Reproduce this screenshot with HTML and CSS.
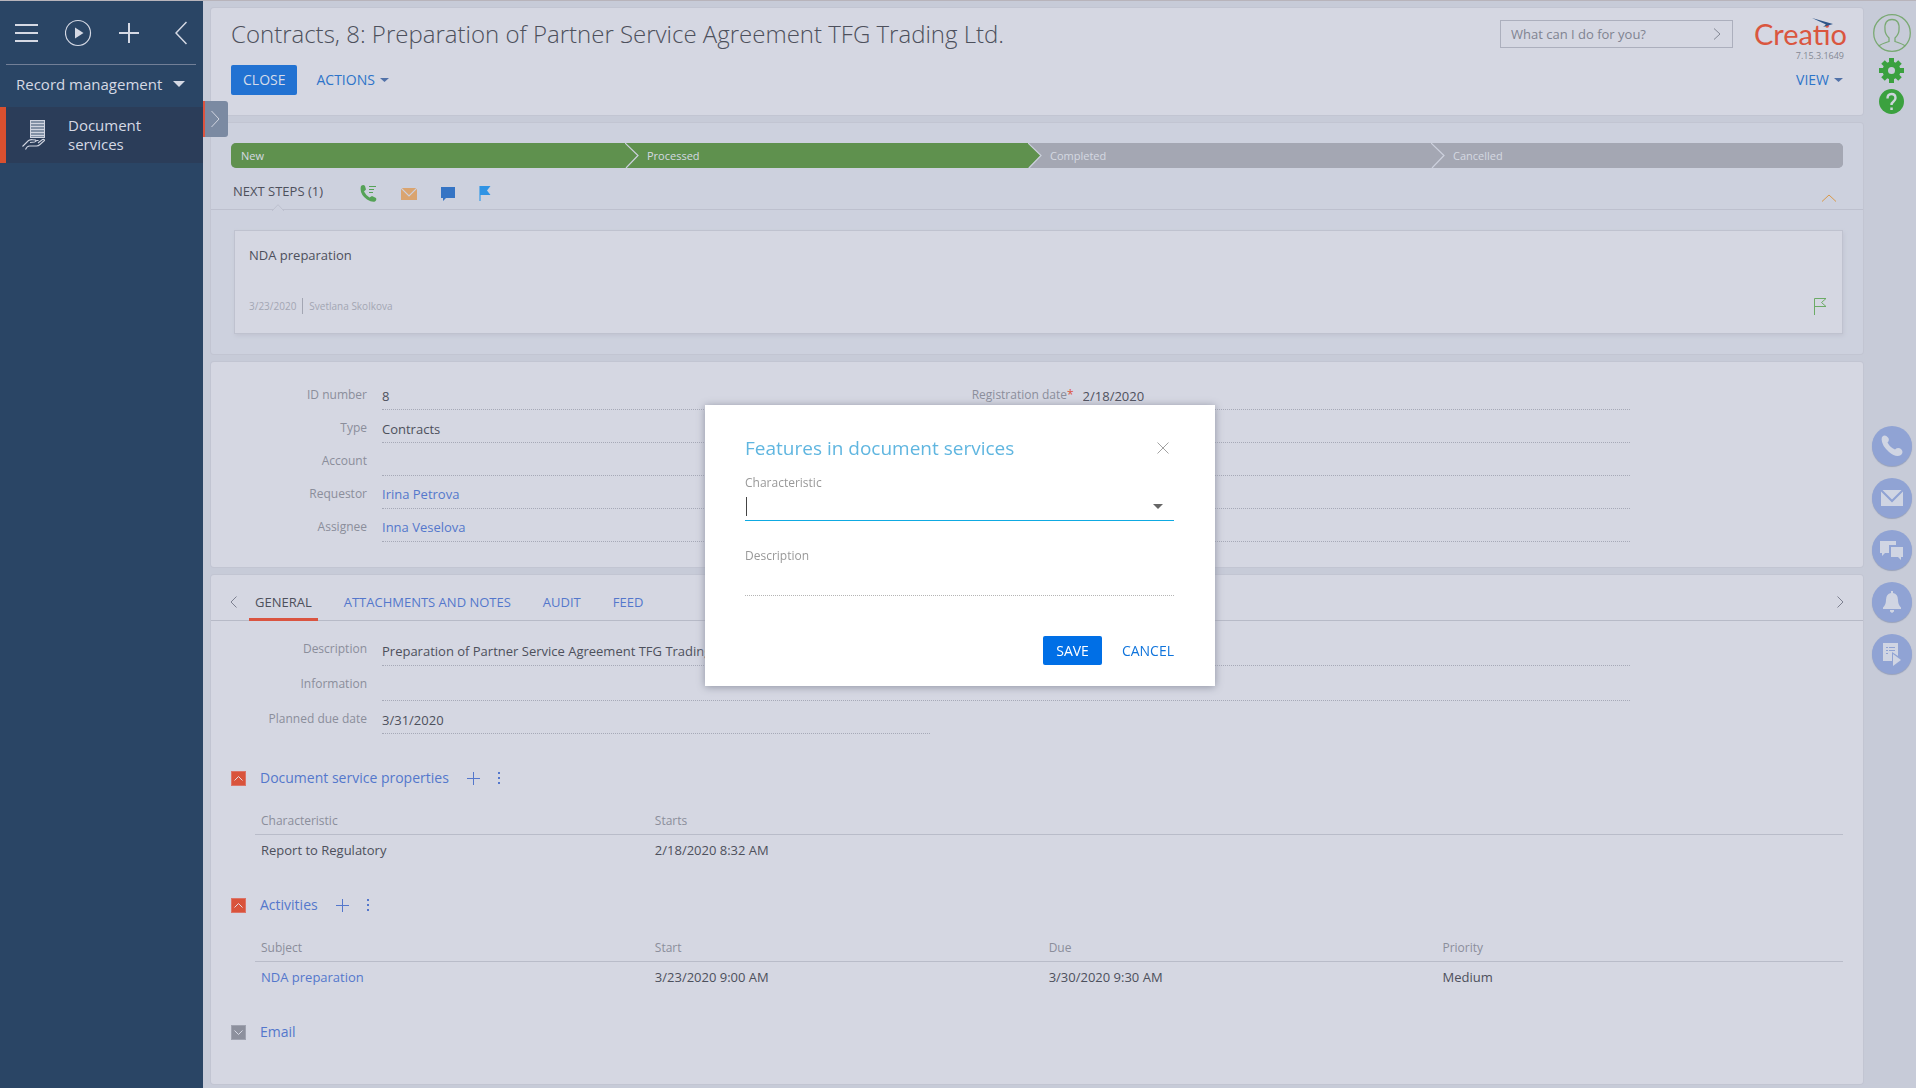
FILE: index.html
```html
<!DOCTYPE html>
<html lang="en">
<head>
<meta charset="utf-8">
<title>Contracts, 8: Preparation of Partner Service Agreement TFG Trading Ltd.</title>
<link rel="stylesheet" href="styles.css">
</head>
<body>
<div class="app">
  <nav class="sidebar">
    <div class="side-tools">
      <button class="icon-btn" aria-label="Menu"><svg width="24" height="20" viewBox="0 0 24 20"><path d="M0 2h23M0 10h23M0 18h23" stroke="#d5d9e4" stroke-width="2"/></svg></button>
      <button class="icon-btn" aria-label="Run process"><svg width="28" height="28" viewBox="0 0 28 28"><circle cx="13" cy="14" r="12.500" fill="none" stroke="#d5d9e4" stroke-width="1.200"/><path d="M10 8.500v11l8.500-5.500z" fill="#d5d9e4"/></svg></button>
      <button class="icon-btn" aria-label="Add"><svg width="20" height="20" viewBox="0 0 20 20"><path d="M10 0v20M0 10h20" stroke="#d5d9e4" stroke-width="2"/></svg></button>
      <button class="icon-btn collapse" aria-label="Collapse"><svg width="12" height="24" viewBox="0 0 12 24"><path d="M11.500 1L1 12l10.500 11" fill="none" stroke="#d5d9e4" stroke-width="1.500"/></svg></button>
    </div>
    <button class="workplace">Record management <svg width="12" height="6" viewBox="0 0 12 6"><path d="M0 0h12L6 6z" fill="#d5d9e4"/></svg></button>
    <a class="section" href="#services">
      <svg width="24" height="32" viewBox="0 0 24 32" fill="none" stroke="#cfd4e0"><rect x="8.500" y="1.500" width="14" height="17" fill="#8291a6"/><path d="M9 4.500h13M9 7.500h13M9 10.500h13M9 13.500h13M9 16.500h13" stroke-width="1.200"/><path d="M.5 27.500l6-6q2-1 4-.8l3 .3q1 1.500-1 2l-4.500.5M13 22.500l2-1h1.500M3.500 30.500q1.500-3.500 4-3.500h7q2 0 3.500-1.500l4.500-4q0-1.500-2-1l-4.500 3.500" stroke-width="1.100"/></svg>
      <span>Document services</span>
    </a>
  </nav>

  <main class="content">
    <button class="handle" aria-label="Show list"><svg width="9" height="18" viewBox="0 0 9 18"><path d="M.5 1L8 9L.5 17" fill="none" stroke="#d0d4df"/></svg></button>
    <header class="card head">
      <div class="head-row">
        <h1>Contracts, 8: Preparation of Partner Service Agreement TFG Trading Ltd.</h1>
        <div class="command">
          <input type="text" placeholder="What can I do for you?" aria-label="Command line">
          <button class="icon-btn" aria-label="Run command"><svg width="8" height="12" viewBox="0 0 8 12"><path d="M1 .5L7 6L1 11.500" fill="none" stroke="#848894"/></svg></button>
        </div>
        <div class="brand">
          <svg class="bird" width="22" height="10" viewBox="0 0 22 10"><path d="M0 0L21 6L11 9L14 6.500z" fill="#2d5488"/></svg>
          <span class="logo">Creatio</span>
          <span class="version">7.15.3.1649</span>
        </div>
      </div>
      <div class="head-actions">
        <button class="btn solid muted">CLOSE</button>
        <button class="btn flat muted">ACTIONS <svg width="9" height="4" viewBox="0 0 9 4"><path d="M0 0h9L4.500 4z" fill="#5272a8"/></svg></button>
        <button class="btn flat muted view">VIEW <svg width="9" height="4" viewBox="0 0 9 4"><path d="M0 0h9L4.500 4z" fill="#5272a8"/></svg></button>
      </div>
    </header>

    <section class="card dash">
      <ol class="stages">
        <li class="done">New</li>
        <li class="done"><svg class="arrow" width="14" height="25" viewBox="0 0 14 25"><path d="M0 0L13 12.500L1 25" fill="none" stroke="#cdd1de" stroke-width="1.200"/></svg>Processed</li>
        <li><svg class="arrow" width="14" height="25" viewBox="0 0 14 25"><path d="M0 0L13 12.500L0 25z" fill="#5f914e"/><path d="M0 0L13 12.500L1 25" fill="none" stroke="#cdd1de" stroke-width="1.200"/></svg>Completed</li>
        <li><svg class="arrow" width="14" height="25" viewBox="0 0 14 25"><path d="M0 0L13 12.500L1 25" fill="none" stroke="#cdd1de" stroke-width="1.200"/></svg>Cancelled</li>
      </ol>
      <div class="steps-bar">
        <span class="steps-title">NEXT STEPS (1)<svg class="notch" width="12" height="7" viewBox="0 0 12 7"><path d="M0 7L6 .7L12 7" fill="#cdd1de" stroke="#bdc0ce"/></svg></span>
        <button class="icon-btn" aria-label="Call"><svg width="17" height="17" viewBox="0 0 17 17"><path d="M1 1q2.500-2 4 0l1 3.500l-2 2q2 4 5.500 6l2.500-1.500l4 2q1 2-1 3.500q-3 1-8-2Q-1 9 1 1z" fill="#55a257"/><path d="M9 1.500h7M9 4.500h5M9 7.500h4" stroke="#55a257"/></svg></button>
        <button class="icon-btn" aria-label="Email"><svg width="16" height="12" viewBox="0 0 16 12"><path d="M0 0h16v12H0z" fill="#daa46f"/><path d="M0 0l8 8l8-8" fill="none" stroke="#cdd1de" stroke-width="1.200"/></svg></button>
        <button class="icon-btn" aria-label="Message"><svg width="14" height="14" viewBox="0 0 14 14"><path d="M0 0h14v11H5l-3 3v-3H0z" fill="#3574c4"/></svg></button>
        <button class="icon-btn" aria-label="Task"><svg width="12" height="15" viewBox="0 0 12 15"><path d="M0 0h2v15H0z" fill="#72b0e4"/><path d="M1 0h10.500L8 4.500L11.500 9H1z" fill="#2f93e4"/></svg></button>
        <button class="icon-btn fold" aria-label="Collapse steps"><svg width="16" height="8" viewBox="0 0 16 8"><path d="M1 7.500L8 1l7 6.500" fill="none" stroke="#d9994a"/></svg></button>
      </div>
      <article class="task">
        <p class="task-name">NDA preparation</p>
        <div class="task-meta"><span>3/23/2020</span><span class="owner">Svetlana Skolkova</span>
          <svg class="flag" width="13" height="17" viewBox="0 0 13 17"><path d="M.5 17V.5H12L7.500 4.500L12 8.500H1" fill="none" stroke="#6cab66"/></svg>
        </div>
      </article>
    </section>

    <section class="card profile">
      <div class="form">
        <div class="field"><label for="f1">ID number</label><input id="f1" value="8"></div>
        <div class="field"><label for="f2">Registration date<b>*</b></label><input id="f2" value="2/18/2020"></div>
        <div class="field"><label for="f3">Type</label><input id="f3" value="Contracts"></div>
        <div class="field"><span class="label"></span><span class="value"></span></div>
        <div class="field"><label for="f5">Account</label><input id="f5"></div>
        <div class="field"><span class="label"></span><span class="value"></span></div>
        <div class="field"><span class="label">Requestor</span><a class="value" href="#requestor">Irina Petrova</a></div>
        <div class="field"><span class="label"></span><span class="value"></span></div>
        <div class="field"><span class="label">Assignee</span><a class="value" href="#assignee">Inna Veselova</a></div>
        <div class="field"><span class="label"></span><span class="value"></span></div>
      </div>
    </section>

    <section class="card details">
      <div class="tabs">
        <button class="icon-btn prev" aria-label="Previous tabs"><svg width="7" height="12" viewBox="0 0 7 12"><path d="M6.500 .5L1 6l5.500 5.500" fill="none" stroke="#7d8090"/></svg></button>
        <a class="tab active" href="#general">GENERAL</a>
        <a class="tab" href="#attachments">ATTACHMENTS AND NOTES</a>
        <a class="tab" href="#audit">AUDIT</a>
        <a class="tab" href="#feed">FEED</a>
        <button class="icon-btn next" aria-label="Next tabs"><svg width="7" height="12" viewBox="0 0 7 12"><path d="M.5 .5L6 6L.5 11.500" fill="none" stroke="#7d8090"/></svg></button>
      </div>
      <div class="form general">
        <div class="field wide"><label for="g1">Description</label><input id="g1" value="Preparation of Partner Service Agreement TFG Trading Ltd."></div>
        <div class="field wide"><label for="g2">Information</label><input id="g2"></div>
        <div class="field"><label for="g3">Planned due date</label><input id="g3" value="3/31/2020"></div>
      </div>

      <section class="detail">
        <div class="detail-head">
          <button class="toggle" aria-label="Collapse"><svg width="9" height="5" viewBox="0 0 9 5"><path d="M.5 4.500l4-4l4 4" fill="none" stroke="#e3dbe2"/></svg></button>
          <h2>Document service properties</h2>
          <button class="icon-btn plus" aria-label="Add"><svg width="13" height="13" viewBox="0 0 13 13"><path d="M6.500 0v13M0 6.500h13" stroke="#5477cc"/></svg></button>
          <button class="icon-btn" aria-label="More"><svg width="2" height="12" viewBox="0 0 2 12"><path d="M0 0h2v2H0zM0 5h2v2H0zM0 10h2v2H0z" fill="#5477cc"/></svg></button>
        </div>
        <table>
          <thead><tr><th>Characteristic</th><th>Starts</th><th></th><th></th></tr></thead>
          <tbody><tr><td>Report to Regulatory</td><td>2/18/2020 8:32 AM</td><td></td><td></td></tr></tbody>
        </table>
      </section>

      <section class="detail">
        <div class="detail-head">
          <button class="toggle" aria-label="Collapse"><svg width="9" height="5" viewBox="0 0 9 5"><path d="M.5 4.500l4-4l4 4" fill="none" stroke="#e3dbe2"/></svg></button>
          <h2>Activities</h2>
          <button class="icon-btn plus" aria-label="Add"><svg width="13" height="13" viewBox="0 0 13 13"><path d="M6.500 0v13M0 6.500h13" stroke="#5477cc"/></svg></button>
          <button class="icon-btn" aria-label="More"><svg width="2" height="12" viewBox="0 0 2 12"><path d="M0 0h2v2H0zM0 5h2v2H0zM0 10h2v2H0z" fill="#5477cc"/></svg></button>
        </div>
        <table>
          <thead><tr><th>Subject</th><th>Start</th><th>Due</th><th>Priority</th></tr></thead>
          <tbody><tr><td><a href="#nda">NDA preparation</a></td><td>3/23/2020 9:00 AM</td><td>3/30/2020 9:30 AM</td><td>Medium</td></tr></tbody>
        </table>
      </section>

      <section class="detail last">
        <div class="detail-head">
          <button class="toggle closed" aria-label="Expand"><svg width="9" height="5" viewBox="0 0 9 5"><path d="M.5 .5l4 4l4-4" fill="none" stroke="#d5d7e2"/></svg></button>
          <h2>Email</h2>
        </div>
      </section>
    </section>
  </main>

  <aside class="rail">
    <button class="icon-btn" aria-label="Profile"><svg width="38" height="38" viewBox="0 0 38 38" fill="none" stroke="#7aa973" stroke-width="1.300"><circle cx="19" cy="19" r="18.300"/><path d="M6 32q2-2 10-4.500V24q-4-4-4-8q-1-10.500 7-10.500T26 16q0 4-4 8v3.500q8 2.500 10 4.500"/></svg></button>
    <button class="icon-btn" aria-label="Settings"><svg width="25" height="25" viewBox="-12.500 -12.500 25 25"><g fill="#3ba13f"><circle r="9"/><path d="M-2.500-12.500h5v25h-5zM-12.500-2.500h25v5h-25z"/><path d="M-2.500-12h5v24h-5zM-12-2.500h24v5h-24z" transform="rotate(45)"/></g><circle r="3.500" fill="#c7cbd8"/></svg></button>
    <button class="icon-btn" aria-label="Help"><svg width="25" height="25" viewBox="0 0 25 25"><circle cx="12.500" cy="12.500" r="12.500" fill="#3ba13f"/><path d="M8.500 9.500q0-4.500 4-4.500t4 4q0 2-2 3.500t-2 3.500" fill="none" stroke="#ced5db" stroke-width="2.400"/><path d="M11.300 18.500h2.500v2.500h-2.500z" fill="#ced5db"/></svg></button>
    <div class="comm">
      <button aria-label="Calls"><svg width="22" height="22" viewBox="0 0 22 22"><path d="M1 2Q4-1 7 2.500Q9 5 6.500 7.500Q9 12.500 14 14.500Q17 12 20 14Q23 17 20 20Q15 23 8 17Q-1 9 1 2z"/></svg></button>
      <button aria-label="Mail"><svg width="22" height="16" viewBox="0 0 22 16"><path d="M1.500 0h19L11 9.500zM0 1.500L11 12.500L22 1.500V16H0z"/></svg></button>
      <button aria-label="Chat"><svg width="23" height="19" viewBox="0 0 23 19"><path d="M0 0h16v4H9v8H5l-3 3v-3H0zM11 6h12v10h-2v3l-3-3h-7z"/></svg></button>
      <button aria-label="Notifications"><svg width="18" height="22" viewBox="0 0 18 22"><path d="M8 0h2v2q5 1 5 7q0 5 3 7.500V18H0v-1.500Q3 14 3 9q0-6 5-7zM7 19h4v1.500L9 22L7 20.500z"/></svg></button>
      <button aria-label="Processes"><svg width="18" height="23" viewBox="0 0 18 23"><path d="M0 0h15v13l-6-4v9H0z"/><path d="M10 11l8 6l-8 6z"/><path d="M3 4.500h2M6 4.500h6M3 7.500h2M6 7.500h6M3 10.500h2" stroke="#90a3d4"/></svg></button>
    </div>
  </aside>
</div>

<div class="overlay">
  <form class="modal" role="dialog" aria-labelledby="dlg">
    <div class="modal-head">
      <h2 id="dlg">Features in document services</h2>
      <button type="button" class="icon-btn" aria-label="Close"><svg width="12" height="12" viewBox="0 0 12 12"><path d="M.5 .5l11 11M11.500 .5l-11 11" stroke="#a2a2a2"/></svg></button>
    </div>
    <label for="characteristic">Characteristic</label>
    <div class="combo">
      <span class="caret"></span>
      <input id="characteristic" type="text">
      <svg width="10" height="5" viewBox="0 0 10 5"><path d="M0 0h10L5 5z" fill="#666"/></svg>
    </div>
    <label for="description">Description</label>
    <input id="description" class="line" type="text">
    <div class="modal-foot">
      <button type="button" class="btn solid">SAVE</button>
      <button type="button" class="btn flat">CANCEL</button>
    </div>
  </form>
</div>
</body>
</html>
```
FILE: styles.css
```css
* { box-sizing: border-box; }
body {
  margin: 0;
  background: #c7cbd8;
  color: #4d505c;
  font: 13px/18px "Open Sans", "Noto Sans", sans-serif;
}
button, input { font: inherit; color: inherit; border: 0; background: none; padding: 0; margin: 0; outline: 0; }
svg { display: block; flex: none; }
h1, h2, p { margin: 0; font-weight: 400; }
a { color: #5477cc; text-decoration: none; }
.icon-btn { display: block; flex: none; }

.app { display: flex; min-height: 100vh; border-top: 1px solid #b8b4bb; }

/* Left navigation */
.sidebar { flex: none; width: 203px; background: #2a4565; color: #d5d9e4; font-size: 15px; line-height: 19px; }
.side-tools {
  display: flex; align-items: center; gap: 26px;
  height: 64px; margin: 0 7px 0 6px; padding: 0 9px; border-bottom: 1px solid #727f97;
}
.collapse { margin-left: auto; }
.workplace { display: flex; align-items: center; justify-content: space-between; width: 100%; height: 42px; padding: 0 18px 4px 16px; }
.section {
  display: flex; align-items: center; gap: 22px; height: 56px; padding: 0 16px;
  border-left: 6px solid #d9502f; background: #2b3d59; color: #d5d9e4;
}

/* Main column */
.content { position: relative; flex: 1; min-width: 0; display: flex; flex-direction: column; gap: 8px; padding: 7px 0 4px 8px; }
.card { border-radius: 3px; background: #d5d7e2; box-shadow: 0 0 0 1px #c2c5d2; padding: 0 20px; }
.handle {
  position: absolute; left: 0; top: 100px; width: 25px; height: 36px; padding-left: 6px;
  border-left: 2px solid #dc5440; border-radius: 0 3px 3px 0; background: #7b8aa2;
}
.head { height: 107px; }
.head-row { display: flex; align-items: flex-start; height: 57px; }
.head h1 { flex: 1; padding-top: 10px; font-size: 24px; line-height: 32px; font-weight: 300; }
.command {
  display: flex; align-items: center; width: 233px; height: 28px; margin: 12px 20px 0 0;
  padding: 0 11px 0 10px; border: 1px solid #acafbd;
}
.command input { flex: 1; min-width: 0; }
.command input::placeholder { color: #7f8391; opacity: 1; }
.brand { position: relative; width: 94px; margin-right: -4px; padding-top: 10px; text-align: right; }
.bird { position: absolute; left: 59px; top: 10px; }
.logo { display: block; color: #da563f; font: 400 29px/32px Lato, sans-serif; white-space: nowrap; }
.version { display: block; margin-right: 3px; color: #848894; font-size: 9px; line-height: 12px; }
.head-actions { display: flex; gap: 19px; }
.btn { display: flex; align-items: center; justify-content: center; gap: 5px; height: 29px; border-radius: 2px; font-size: 14px; }
.btn.solid { padding: 0 13px; background: #006fe6; color: #fff; }
.btn.flat { color: #0f74dc; }
.btn.solid.muted { height: 30px; padding: 0 12px; background: #2272d2; color: #d5dcea; }
.btn.flat.muted { height: 30px; color: #2d74c9; }
.head-actions .view { margin-left: auto; }

/* Stage bar and next steps */
.dash { height: 231px; padding-top: 20px; background: #cdd1de; }
.stages {
  display: flex; height: 25px; margin: 0; padding: 0; list-style: none; border-radius: 5px;
  background: #a4a7b3; color: #d5d9e2; font-size: 11px; line-height: 25px;
}
.stages li { width: 25%; display: flex; gap: 8px; background: #a4a7b3; }
.stages li:first-child { padding-left: 10px; border-radius: 5px 0 0 5px; }
.stages li:last-child { border-radius: 0 5px 5px 0; }
.stages .done { background: #5f914e; }
.arrow { margin-left: -9px; background: #a4a7b3; }
.done .arrow { background: #5f914e; }
.steps-bar { display: flex; align-items: center; gap: 24px; height: 42px; margin: 0 -20px; padding: 10px 26px 0 22px; border-bottom: 1px solid #bdc0ce; }
.steps-title { position: relative; margin-right: 13px; padding-bottom: 5px; }
.notch { position: absolute; left: 39px; top: 22px; }
.fold { margin-left: auto; padding-top: 8px; }
.task { height: 104px; margin: 20px 0 0 3px; padding: 15px 15px 15px 14px; border: 1px solid #bfc2cf; background: #d5d7e2; box-shadow: 1px 2px 4px #c2c5d2; }
.task-meta { display: flex; align-items: center; gap: 6px; margin-top: 33px; height: 18px; color: #a3a6b3; font-size: 10px; line-height: 16px; }
.owner { padding-left: 6px; border-left: 1px solid #a3a6b3; }
.flag { margin-left: auto; }

/* Record forms */
.form { display: grid; grid-template-columns: 1fr 1fr; column-gap: 2px; width: 86.8%; }
.profile { height: 205px; padding-top: 15px; }
.field { display: flex; gap: 15px; height: 33px; align-items: stretch; }
.field.wide { grid-column: 1 / -1; height: 35px; }
.field label, .field .label { flex: none; width: 136px; padding-top: 9px; color: #8b8e9b; font-size: 12px; text-align: right; }
.field label b { margin-right: -6px; color: #dc5440; font-weight: 400; }
.field input, .field .value { flex: 1; min-width: 0; padding-top: 5px; border-bottom: 1px dotted #a6a9b7; }
.field .value { padding-top: 9px; }
.general { padding-top: 10px; }

/* Tabs and details */
.details { flex: 1; min-height: 500px; }
.tabs { display: flex; height: 46px; margin: 0 -20px; padding: 0 19px; border-bottom: 1px solid #b7bac7; line-height: 54px; }
.tab { height: 46px; margin-right: 20px; padding: 0 6px; }
.tab.active { margin-left: 12px; border-bottom: 3px solid #da5440; color: #4d505c; }
.next { margin-left: auto; }
.prev, .next { padding-top: 8px; }
.detail { height: 127px; }
.detail.last { height: auto; }
.general + .detail { margin-top: 33px; }
.detail-head { display: flex; align-items: center; height: 22px; }
.detail h2 { margin: 0 18px 0 14px; color: #5477cc; font-size: 14px; line-height: 22px; }
.toggle { display: flex; align-items: center; justify-content: center; width: 15px; height: 15px; border: 1px solid #dc7468; background: #d9533b; }
.toggle.closed { border-color: #a0a3b0; background: #8d909d; }
.plus { margin-right: 18px; }
.detail table { width: calc(100% - 24px); margin: 20px 0 0 24px; border-collapse: collapse; table-layout: fixed; text-align: left; }
.detail th, .detail td { width: 24.8%; padding: 0 6px; }
.detail th:last-child { width: auto; }
.detail th { height: 25px; border-bottom: 1px solid #b9bcc9; color: #8b8e9b; font-size: 12px; font-weight: 400; }
.detail td { height: 31px; }

/* Right rail */
.rail { flex: none; display: flex; flex-direction: column; align-items: center; width: 53px; padding: 13px 0 0 4px; }
.rail > .icon-btn + .icon-btn { margin-top: 6px; }
.comm { display: flex; flex-direction: column; gap: 12px; margin-top: 312px; }
.comm button {
  display: flex; align-items: center; justify-content: center; width: 40px; height: 40px;
  border-radius: 50%; background: #90a3d4; box-shadow: 0 1px 1px #98a2bb;
}
.comm svg { fill: #d0d5e3; }

/* Mini page dialog */
.overlay { position: fixed; inset: 0; display: flex; align-items: center; justify-content: center; padding: 3px 0 0 4px; }
.modal { width: 510px; padding: 30px 41px 21px 40px; background: #fff; box-shadow: 0 1px 8px #8f93a2; }
.modal-head { display: flex; align-items: center; justify-content: space-between; height: 26px; margin-bottom: 13px; padding-right: 5px; }
.modal h2 { color: #60b6e0; font-size: 19px; line-height: 26px; }
.modal label { display: block; color: #999; font-size: 12px; }
.combo { display: flex; align-items: center; height: 29px; margin-bottom: 26px; padding: 0 11px 0 1px; border-bottom: 1px solid #0eaae2; }
.combo input { flex: 1; }
.caret { width: 1px; height: 19px; background: #444; }
.line { display: block; width: 100%; height: 31px; border-bottom: 1px dotted #b5b5b5; }
.modal-foot { display: flex; justify-content: flex-end; gap: 20px; margin-top: 40px; }
```
